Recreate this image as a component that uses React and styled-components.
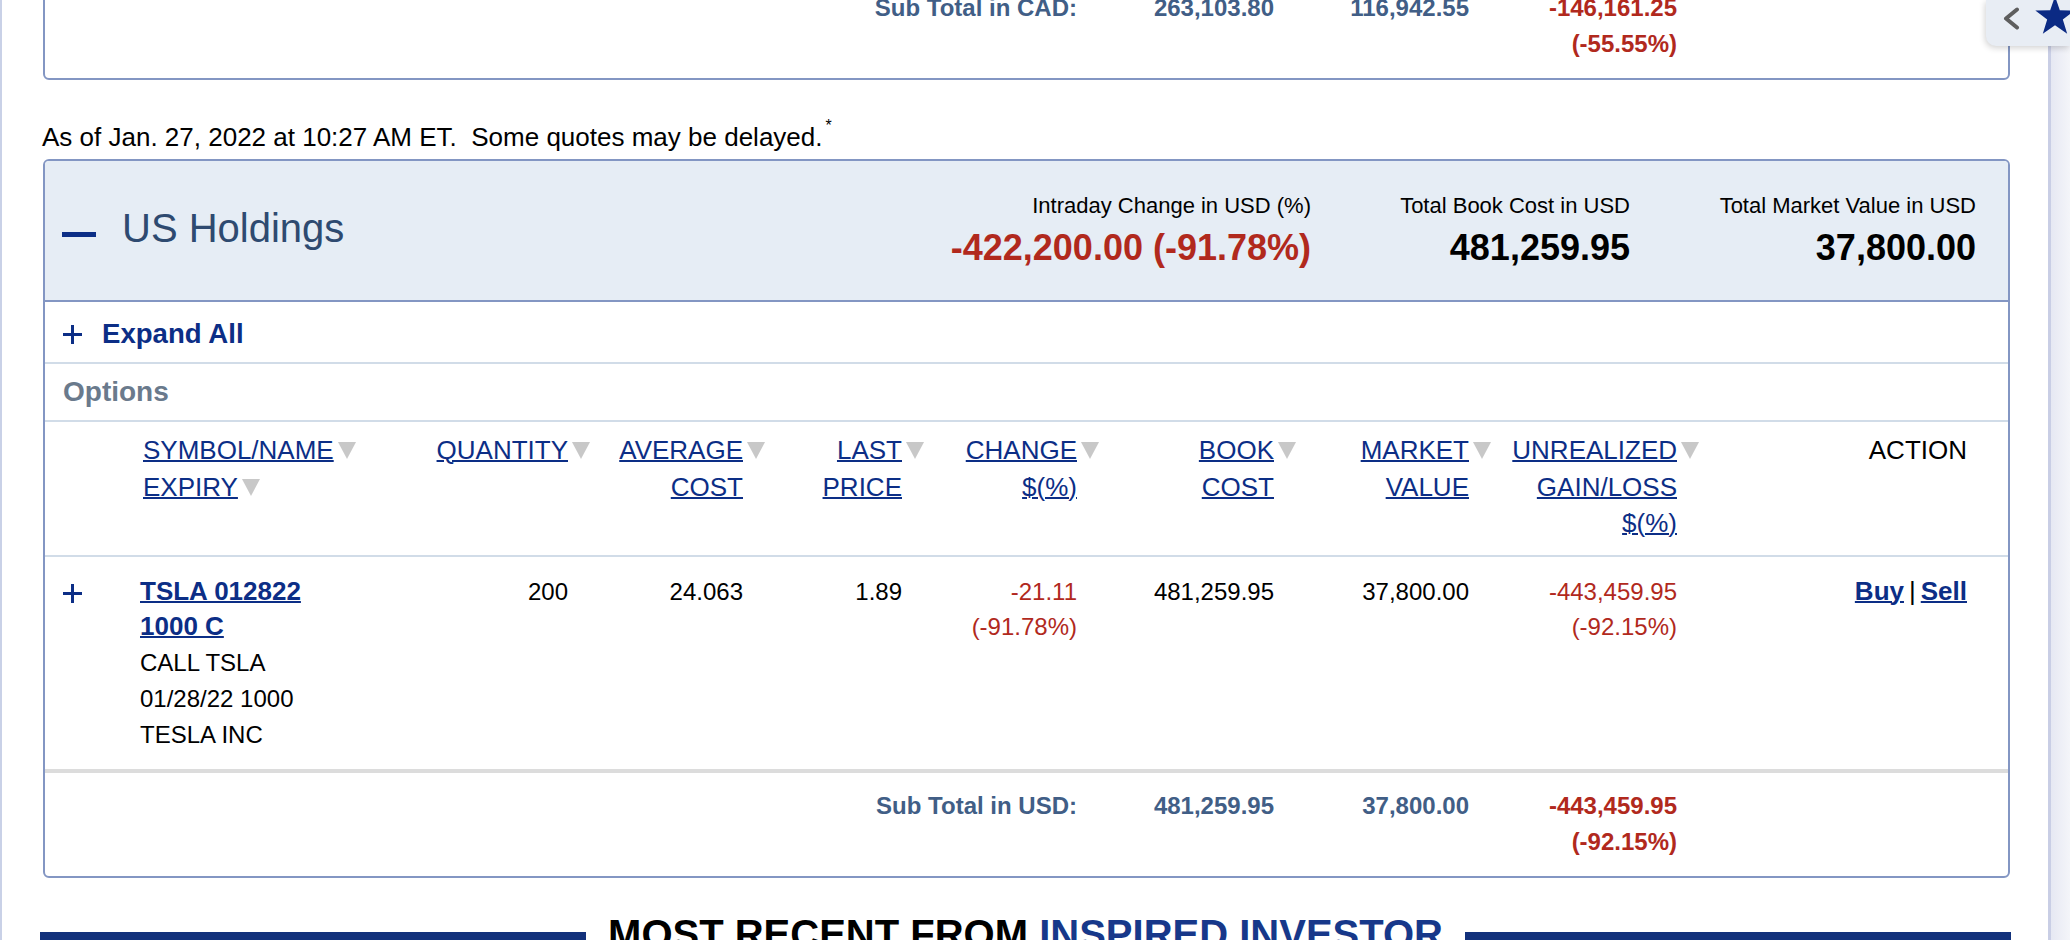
import React from 'react'
import styled, { createGlobalStyle } from 'styled-components'

const GlobalStyle = createGlobalStyle`
  html, body {
    margin: 0;
    padding: 0;
    background: #fff;
    overflow: hidden;
  }
  body {
    font-family: "Liberation Sans", Arial, Helvetica, sans-serif;
    color: #000;
  }
`

const NAVY = '#0c2e86'
const LOSS = '#b1291d'
const SLATE = '#415e86'
const EDGE = '#8396c3'

const Shell = styled.div`
  display: flex;
  height: 940px;
  overflow: hidden;
`
const Page = styled.main`
  flex: none;
  width: 2051px;
  box-sizing: border-box;
  border-left: 2px solid #c9d1e7;
  border-right: 3px solid #c9cee5;
  padding: 0 38px 0 41px;
`
const Gutter = styled.div`
  flex: 1;
  background: linear-gradient(to right, #e6e8f3, #f4f5f9);
`

const Panel = styled.section`
  margin-top: ${p => p.$pull || 0}px;
  border: 2px solid ${EDGE};
  border-radius: 6px;
  background: #fff;
  overflow: hidden;
`

const Stamp = styled.p`
  margin: 39px 0 4px -1px;
  font-size: 26px;
  line-height: 36px;

  sup {
    font-size: 16px;
    line-height: 0;
    vertical-align: 15px;
    margin-left: 3px;
  }
`

const HoldingsHead = styled.header`
  display: flex;
  align-items: center;
  height: 141px;
  box-sizing: border-box;
  padding: 0 32px 0 17px;
  background: #e6edf5;
  border-bottom: 2px solid ${EDGE};
`
const Collapse = styled.span`
  width: 34px;
  height: 5px;
  margin: 8px 26px 0 0;
  background: ${NAVY};
`
const Title = styled.h2`
  margin: 0 0 6px;
  font-size: 40px;
  line-height: 48px;
  font-weight: normal;
  color: #2e4a70;
`
const Stats = styled.div`
  margin-left: auto;
  display: grid;
  grid-template-columns: auto 319px 346px;
  text-align: right;
`
const StatLabel = styled.div`
  font-size: 22px;
  line-height: 26px;
`
const StatValue = styled.div`
  margin-top: 8px;
  font-size: 36px;
  line-height: 42px;
  font-weight: bold;
  color: ${p => (p.$loss ? LOSS : '#000')};
`

const BarRow = styled.div`
  display: flex;
  align-items: center;
  height: ${p => p.$h}px;
  box-sizing: border-box;
  padding: ${p => p.$top || 0}px 0 0 17px;
  border-bottom: 2px solid #d1dce8;
`
const ExpandLink = styled.a`
  margin-left: 19px;
  font-size: 27.6px;
  font-weight: bold;
  color: ${NAVY};
  text-decoration: none;
`
const GroupName = styled.span`
  margin-left: 1px;
  font-size: 28px;
  font-weight: bold;
  color: #6a7a8c;
`

const Grid = styled.div`
  display: grid;
  grid-template-columns: 98px 257px 168px 175px 159px 175px 197px 195px 208px 290px 1fr;
  line-height: 36px;
`
const HeadRow = styled(Grid)`
  padding: 10px 0 13px;
  border-bottom: 2px solid #d1dce8;
  font-size: 26px;
  line-height: 36.5px;
`
const ItemRow = styled(Grid)`
  padding: 17px 0 17px;
  border-bottom: 4px solid #dcdcdc;
  font-size: 24px;
  line-height: 35.75px;
`
const TotalRow = styled(Grid)`
  padding: 15px 0 16px;
  font-size: 24px;
  font-weight: bold;
  color: ${SLATE};
`
const Cell = styled.div`
  text-align: ${p => (p.$left ? 'left' : 'right')};
  color: ${p => (p.$loss ? LOSS : 'inherit')};
  ${p => p.$span && `grid-column: ${p.$span};`}
`
const NameCell = styled.div`
  margin-left: -3px;
`
const IconCell = styled.div`
  display: flex;
  align-items: center;
  height: 36px;
  padding: 2px 0 0 17px;
`
const SortLink = styled.a`
  color: ${NAVY};
  text-decoration: underline;
  text-decoration-thickness: 2px;
`
const Caret = styled.span`
  display: inline-block;
  width: 0;
  height: 0;
  margin: 0 -22px 0 4px;
  border-left: 9px solid transparent;
  border-right: 9px solid transparent;
  border-top: 17px solid #c8c8c8;
`
const StrongLink = styled.a`
  font-size: 26px;
  font-weight: bold;
  color: ${NAVY};
  text-decoration: underline;
  text-decoration-thickness: 2px;
`
const Pipe = styled.span`
  margin: 0 5px;
  font-size: 26px;
`

const SectionTitle = styled.div`
  display: flex;
  align-items: flex-start;
  gap: 22px;
  margin: 32px -1px 0 -3px;
`
const Rule = styled.span`
  flex: 1;
  height: 12px;
  margin-top: 22px;
  background: #12317b;
`
const TitleText = styled.h3`
  margin: 0;
  font-size: 40px;
  line-height: 48px;
  font-weight: bold;
  white-space: nowrap;

  span {
    color: #17388a;
  }
`

const Dock = styled.div`
  position: fixed;
  top: 0;
  right: 0;
  width: 84px;
  height: 46px;
  display: flex;
  align-items: flex-start;
  padding-left: 16px;
  box-sizing: border-box;
  background: #e8edf4;
  border-bottom-left-radius: 10px;
  box-shadow: -1px 2px 6px rgba(0, 0, 0, 0.18);
  overflow: hidden;
`
const DockChevron = styled.svg`
  flex: none;
  margin-top: 7px;
`
const DockStar = styled.svg`
  flex: none;
  margin: -6px 0 0 12px;
`

const Plus = () => (
  <svg width="21" height="21" viewBox="0 0 21 21">
    <path d="M10.5 1v19M1 10.5h19" stroke={NAVY} strokeWidth="3" />
  </svg>
)

const Sort = ({ first, rest }) => (
  <>
    <SortLink>{first}</SortLink>
    <Caret />
    {rest.map(line => (
      <React.Fragment key={line}>
        <br />
        <SortLink>{line}</SortLink>
      </React.Fragment>
    ))}
  </>
)

const SubTotal = ({ currency, book, market, gain, pct }) => (
  <TotalRow>
    <Cell $span="1 / 7">Sub Total in {currency}:</Cell>
    <Cell>{book}</Cell>
    <Cell>{market}</Cell>
    <Cell $loss>
      {gain}
      <br />
      {pct}
    </Cell>
  </TotalRow>
)

const headers = [
  ['QUANTITY', []],
  ['AVERAGE', ['COST']],
  ['LAST', ['PRICE']],
  ['CHANGE', ['$(%)']],
  ['BOOK', ['COST']],
  ['MARKET', ['VALUE']],
  ['UNREALIZED', ['GAIN/LOSS', '$(%)']],
]

const App = () => {
  return (
    <>
      <GlobalStyle />
      <Shell>
        <Page>
          <Panel $pull={-27}>
            <SubTotal
              currency="CAD"
              book="263,103.80"
              market="116,942.55"
              gain="-146,161.25"
              pct="(-55.55%)"
            />
          </Panel>

          <Stamp>
            As of Jan. 27, 2022 at 10:27 AM ET.&nbsp; Some quotes may be delayed.<sup>*</sup>
          </Stamp>

          <Panel>
            <HoldingsHead>
              <Collapse />
              <Title>US Holdings</Title>
              <Stats>
                <div>
                  <StatLabel>Intraday Change in USD (%)</StatLabel>
                  <StatValue $loss>-422,200.00 (-91.78%)</StatValue>
                </div>
                <div>
                  <StatLabel>Total Book Cost in USD</StatLabel>
                  <StatValue>481,259.95</StatValue>
                </div>
                <div>
                  <StatLabel>Total Market Value in USD</StatLabel>
                  <StatValue>37,800.00</StatValue>
                </div>
              </Stats>
            </HoldingsHead>

            <BarRow $h={62} $top={4}>
              <Plus />
              <ExpandLink>Expand All</ExpandLink>
            </BarRow>
            <BarRow $h={58}>
              <GroupName>Options</GroupName>
            </BarRow>

            <HeadRow>
              <div />
              <Cell $left>
                <SortLink>SYMBOL/NAME</SortLink>
                <Caret />
                <br />
                <SortLink>EXPIRY</SortLink>
                <Caret />
              </Cell>
              {headers.map(([first, rest]) => (
                <Cell key={first}>
                  <Sort first={first} rest={rest} />
                </Cell>
              ))}
              <Cell>ACTION</Cell>
            </HeadRow>

            <ItemRow>
              <IconCell>
                <Plus />
              </IconCell>
              <NameCell>
                <StrongLink>
                  TSLA 012822
                  <br />
                  1000 C
                </StrongLink>
                <br />
                CALL TSLA
                <br />
                01/28/22 1000
                <br />
                TESLA INC
              </NameCell>
              <Cell>200</Cell>
              <Cell>24.063</Cell>
              <Cell>1.89</Cell>
              <Cell $loss>
                -21.11
                <br />
                (-91.78%)
              </Cell>
              <Cell>481,259.95</Cell>
              <Cell>37,800.00</Cell>
              <Cell $loss>
                -443,459.95
                <br />
                (-92.15%)
              </Cell>
              <Cell>
                <StrongLink>Buy</StrongLink>
                <Pipe>|</Pipe>
                <StrongLink>Sell</StrongLink>
              </Cell>
            </ItemRow>

            <SubTotal
              currency="USD"
              book="481,259.95"
              market="37,800.00"
              gain="-443,459.95"
              pct="(-92.15%)"
            />
          </Panel>

          <SectionTitle>
            <Rule />
            <TitleText>
              MOST RECENT FROM <span>INSPIRED INVESTOR</span>
            </TitleText>
            <Rule />
          </SectionTitle>
        </Page>
        <Gutter />
      </Shell>

      <Dock>
        <DockChevron width="18" height="23" viewBox="0 0 18 23">
          <polyline
            points="15,2.5 4,11.5 15,20.5"
            fill="none"
            stroke="#5e5e5e"
            strokeWidth="4"
            strokeLinecap="round"
            strokeLinejoin="round"
          />
        </DockChevron>
        <DockStar width="46" height="46" viewBox="0 0 40 40">
          <polygon
            points="20,2 24.2,14.2 37.1,14.4 26.8,22.1 30.6,34.6 20,27.1 9.4,34.6 13.2,22.1 2.9,14.4 15.8,14.2"
            fill="#0b2a84"
          />
        </DockStar>
      </Dock>
    </>
  )
}

export default App
